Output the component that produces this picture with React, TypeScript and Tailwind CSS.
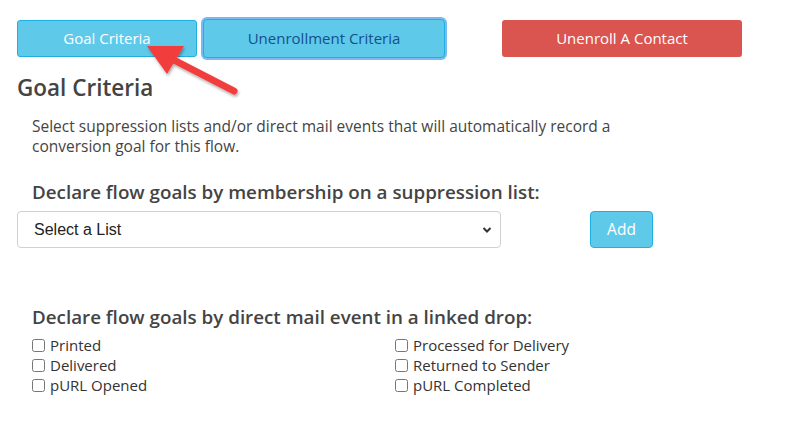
import React from "react";

const LEFT_EVENTS = ["Printed", "Delivered", "pURL Opened"];
const RIGHT_EVENTS = ["Processed for Delivery", "Returned to Sender", "pURL Completed"];

function EventBox({ label }: { label: string }) {
  return (
    <label className="flex h-5 items-center gap-[5px] text-[15px] leading-5 text-[#333]">
      <input type="checkbox" className="h-[13px] w-[13px] rounded-[2px] border border-[#666]" />
      {label}
    </label>
  );
}

function Arrow() {
  return (
    <svg className="pointer-events-none absolute left-[140px] top-[36px]" width="110" height="70" viewBox="0 0 110 70">
      <defs>
        <filter id="sh" x="-20%" y="-20%" width="140%" height="140%">
          <feDropShadow dx="1" dy="2" stdDeviation="1.5" floodColor="#000" floodOpacity="0.35" />
        </filter>
      </defs>
      <g filter="url(#sh)">
        <line x1="94" y1="55" x2="28" y2="21" stroke="#f23c3c" strokeWidth="7" strokeLinecap="round" />
        <polygon points="7,10 44,10 27,38" fill="#f23c3c" />
      </g>
    </svg>
  );
}

export default function App() {
  return (
    <div className="relative h-[421px] w-[793px] bg-white font-['Open_Sans',sans-serif]">
      <div className="flex items-center px-[17px] pt-[19px]">
        <button className="h-[37px] w-[180px] rounded-[3px] border border-[#1eb0e2] bg-[#5fc9ea] text-[15px] text-white">
          Goal Criteria
        </button>
        <button className="ml-[6px] h-[39px] w-[242px] rounded-[4px] border border-[#1eb0e2] bg-[#5fc9ea] text-[15px] text-[#14508a] ring-2 ring-[#7ab9f2]">
          Unenrollment Criteria
        </button>
        <button className="ml-[57px] h-[37px] w-[240px] rounded-[3px] bg-[#da5450] text-[15px] text-white">
          Unenroll A Contact
        </button>
      </div>

      <h2 className="mt-[16px] px-[17px] text-[22.5px] font-semibold leading-7 text-[#444]">Goal Criteria</h2>

      <p className="mt-[14px] w-[640px] pl-[32px] text-[15.5px] leading-5 text-[#444]">
        Select suppression lists and/or direct mail events that will automatically record a conversion goal for this
        flow.
      </p>

      <h3 className="mt-[24px] pl-[32px] text-[18.8px] font-semibold leading-6 text-[#444]">
        Declare flow goals by membership on a suppression list:
      </h3>

      <div className="mt-[7px] flex items-center px-[17px]">
        <div className="flex h-[37px] w-[484px] items-center justify-between rounded-[4px] border border-[#d0d0d0] pl-[16px] pr-[8px] font-['Liberation_Sans',sans-serif] text-[16px] text-[#222]">
          Select a List
          <svg width="10" height="8" viewBox="0 0 10 8">
            <path d="M1.5 2 L5 5.5 L8.5 2" fill="none" stroke="#333" strokeWidth="2" />
          </svg>
        </div>
        <button className="ml-[89px] h-[37px] w-[63px] rounded-[4px] border border-[#1eb0e2] bg-[#5fc9ea] text-[15.5px] text-white">
          Add
        </button>
      </div>

      <h3 className="mt-[57px] pl-[32px] text-[18.8px] font-semibold leading-6 text-[#444]">
        Declare flow goals by direct mail event in a linked drop:
      </h3>

      <div className="mt-[6px] flex pl-[32px]">
        <div className="flex w-[363px] flex-col">
          {LEFT_EVENTS.map((e) => (
            <EventBox key={e} label={e} />
          ))}
        </div>
        <div className="flex flex-col">
          {RIGHT_EVENTS.map((e) => (
            <EventBox key={e} label={e} />
          ))}
        </div>
      </div>

      <Arrow />
    </div>
  );
}
